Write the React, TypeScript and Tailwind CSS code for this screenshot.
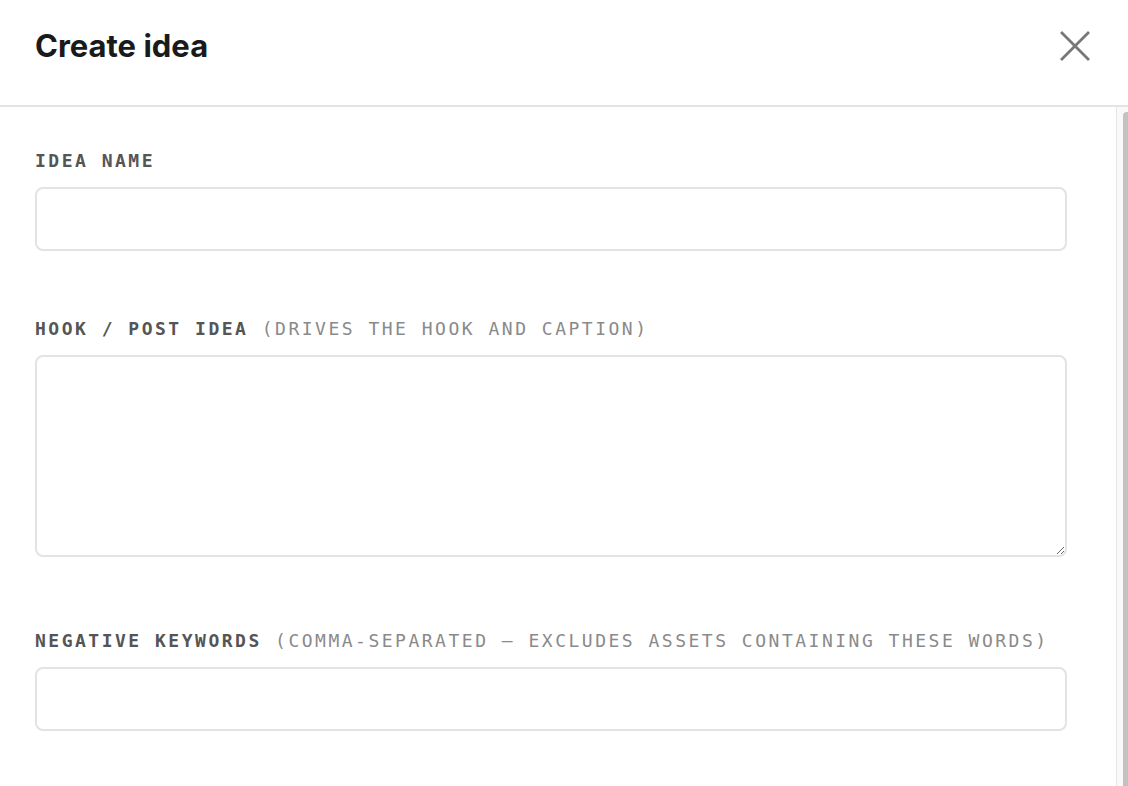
import { useState } from "react";

const labelCls =
    "block text-[18px] leading-[20px] tracking-[2.5px] text-[#555] font-semibold whitespace-nowrap";
const fieldCls =
    "block w-full rounded-[8px] border-2 border-[#e3e3e3] bg-white px-4 text-[16px] text-[#222] outline-none focus:border-[#cfcfcf]";

export default function App() {
    const [name, setName] = useState("");
    const [hook, setHook] = useState("");
    const [negative, setNegative] = useState("");

    return (
        <div className="h-[786px] w-full bg-white flex flex-col overflow-hidden font-['Inter','Noto_Sans',sans-serif]">

            {/* Header */}
            <header className="h-[107px] shrink-0 border-b-2 border-[#e4e4e4] flex items-start justify-between pl-[35px] pr-[38px] pt-[27px]">
                <h1 className="text-[31px] leading-[38px] font-bold text-[#1a1a1a]">
                    Create idea
                </h1>
                <button className="mt-[4px] text-[#777]" aria-label="Close">
                    <svg width="30" height="30" viewBox="0 0 30 30" fill="none">
                        <path d="M2 2 L28 28 M28 2 L2 28" stroke="currentColor" strokeWidth="2.8" strokeLinecap="square" />
                    </svg>
                </button>
            </header>

            {/* Body + scrollbar */}
            <div className="flex-1 flex min-h-0">
                <div className="flex-1 overflow-hidden">
                    <div className="pl-[35px] pr-[49px] pt-[44px] flex flex-col font-['DejaVu_Sans_Mono','Liberation_Mono',monospace]">

                        <label className={labelCls}>IDEA NAME</label>
                        <input
                            className={`${fieldCls} mt-[16px] h-[64px]`}
                            value={name}
                            onChange={(e) => setName(e.target.value)}
                        />

                        <label className={`${labelCls} mt-[68px]`}>
                            HOOK / POST IDEA{" "}
                            <span className="font-normal text-[#8a8a8a]">(DRIVES THE HOOK AND CAPTION)</span>
                        </label>
                        <textarea
                            className={`${fieldCls} mt-[16px] h-[202px] py-3`}
                            value={hook}
                            onChange={(e) => setHook(e.target.value)}
                        />

                        <label className={`${labelCls} mt-[74px]`}>
                            NEGATIVE KEYWORDS{" "}
                            <span className="font-normal text-[#8a8a8a]">
                                (COMMA-SEPARATED — EXCLUDES ASSETS CONTAINING THESE WORDS)
                            </span>
                        </label>
                        <input
                            className={`${fieldCls} mt-[16px] h-[64px]`}
                            value={negative}
                            onChange={(e) => setNegative(e.target.value)}
                        />
                    </div>
                </div>

                {/* scrollbar track */}
                <div className="w-[12px] shrink-0 border-l border-[#e6e6e6] bg-[#f9f9f9] flex justify-end pt-[5px]">
                    <div className="w-[5px] h-full bg-[#c2c2c2] rounded-tl-[4px]" />
                </div>
            </div>
        </div>
    );
}
